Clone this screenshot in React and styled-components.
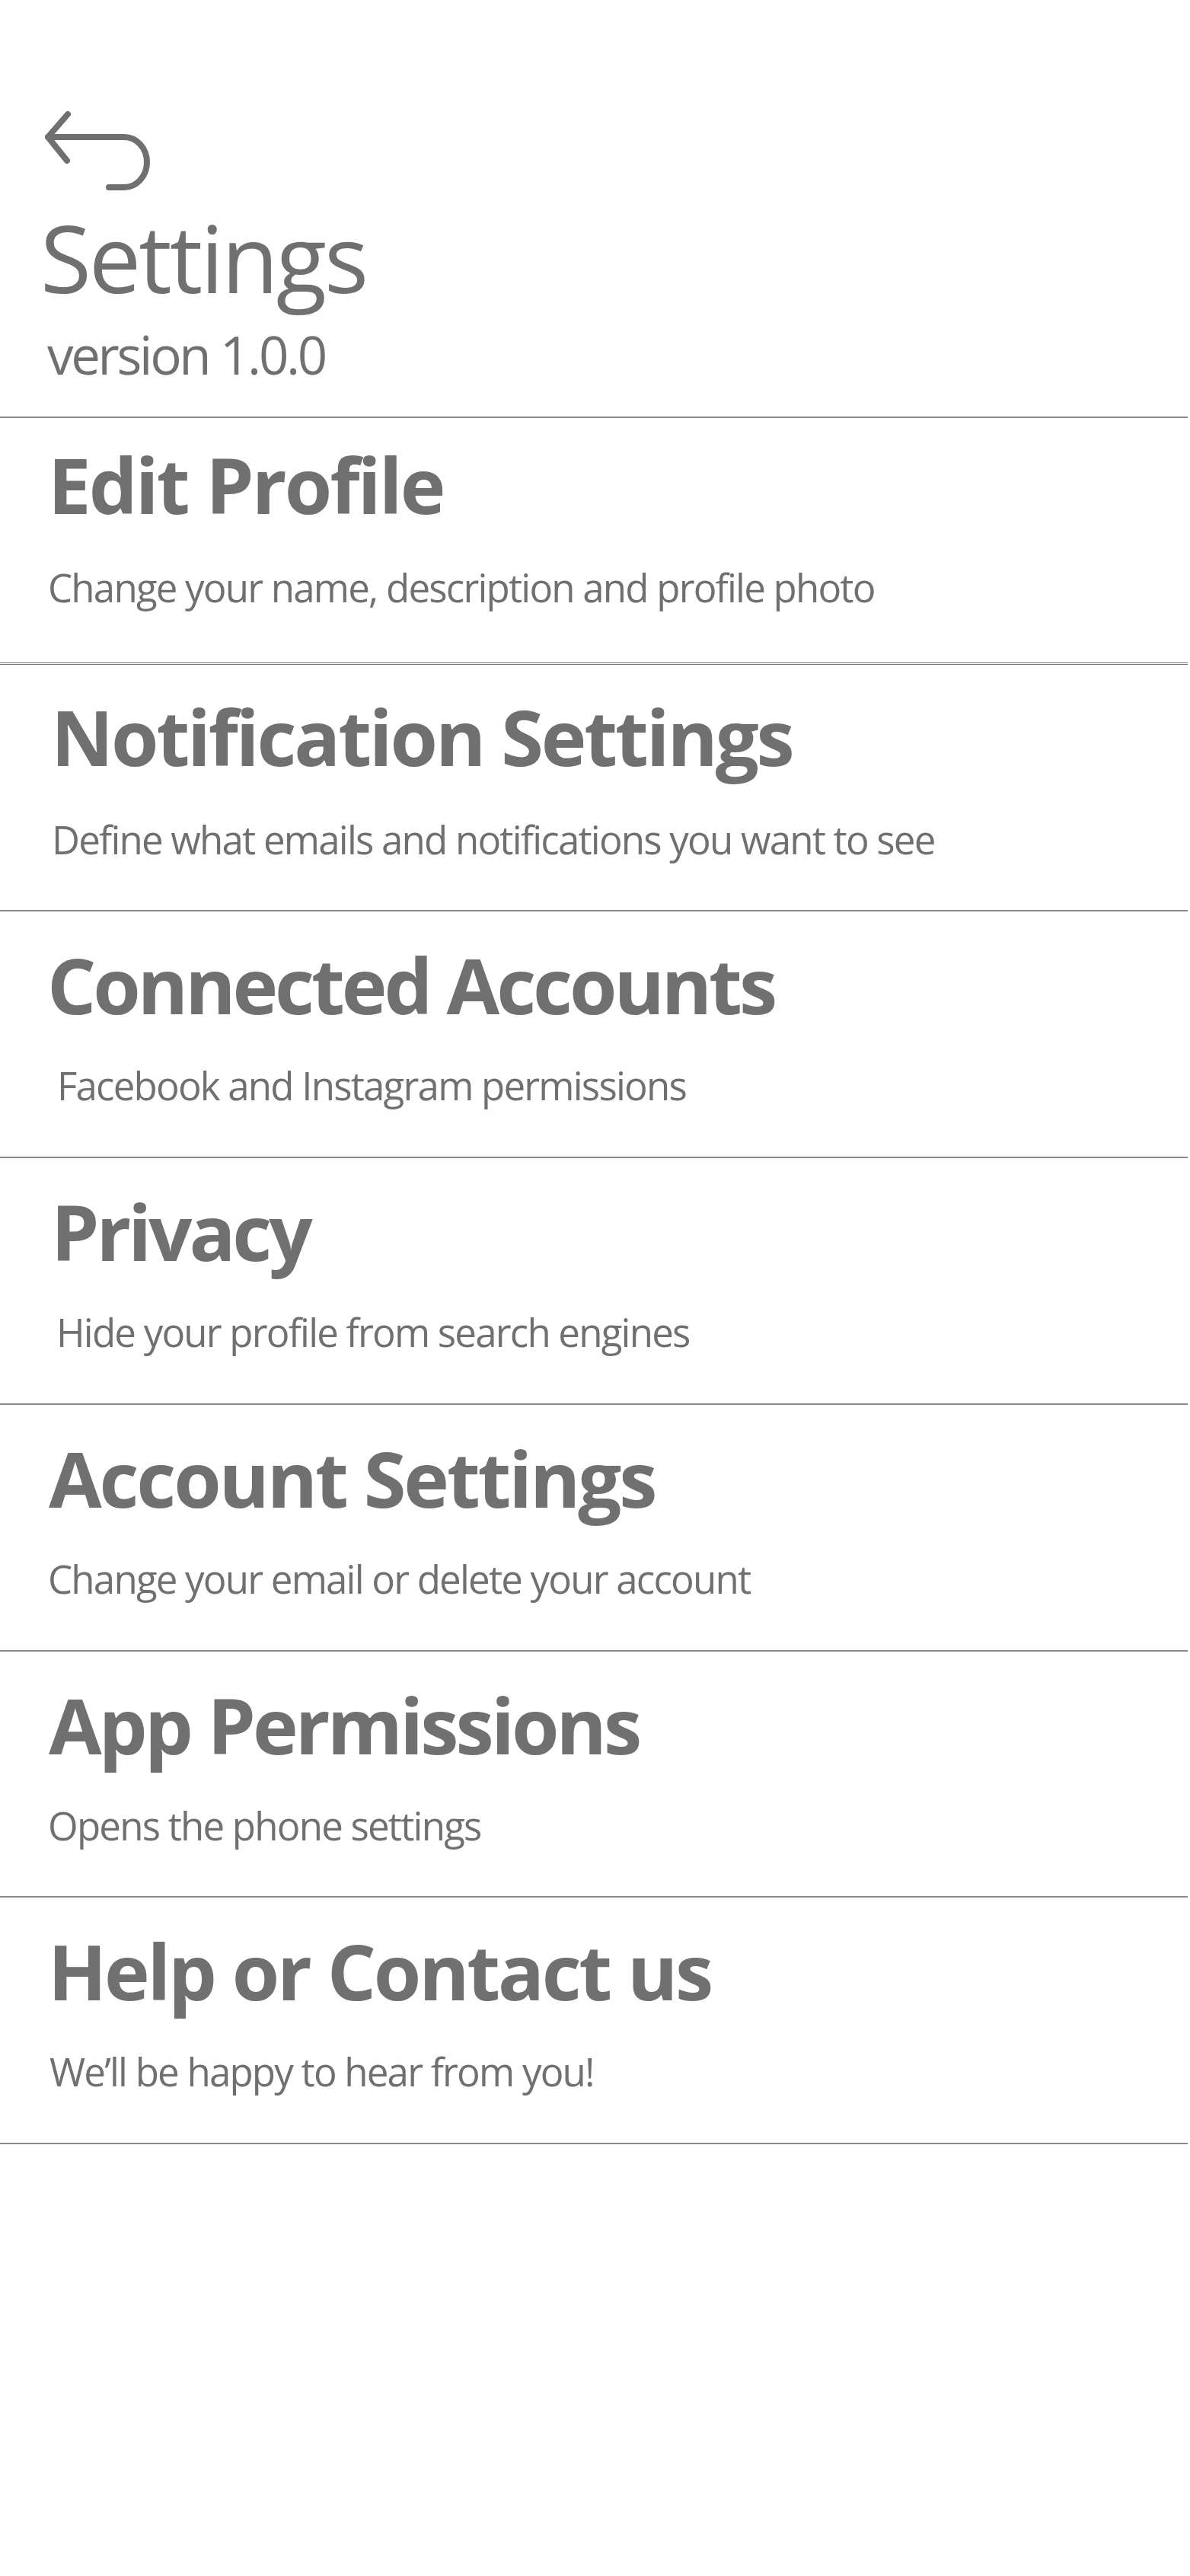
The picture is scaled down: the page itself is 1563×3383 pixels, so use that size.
import React from 'react';
import styled, { createGlobalStyle } from 'styled-components';

const GlobalStyle = createGlobalStyle`
  html, body {
    margin: 0;
    padding: 0;
    background: #ffffff;
  }
  body {
    font-family: "Open Sans", "Noto Sans", "DejaVu Sans", sans-serif;
    color: #707070;
  }
`;

const Page = styled.main`
  width: 1563px;
  min-height: 3383px;
  background: #ffffff;
  display: flex;
  flex-direction: column;
`;

const Header = styled.header`
  display: flex;
  flex-direction: column;
  align-items: flex-start;
  padding: 140px 0 47px 0;
`;

const BackButton = styled.button`
  margin-left: 55px;
  padding: 0;
  border: none;
  background: transparent;
  width: 150px;
  height: 120px;
  display: block;
  cursor: pointer;
  svg {
    display: block;
  }
`;

const PageTitle = styled.h1`
  margin: 17px 0 0 53px;
  font-size: 122px;
  line-height: 1;
  font-weight: 400;
  letter-spacing: -0.025em;
  color: #707070;
`;

const Version = styled.p`
  margin: 32px 0 0 62px;
  font-size: 69px;
  line-height: 1;
  font-weight: 400;
  letter-spacing: -0.048em;
  color: #707070;
`;

const List = styled.ul`
  list-style: none;
  margin: 0;
  padding: 0;
  width: 1560px;
  border-bottom: 2px solid #8a8a8a;
`;

const Row = styled.li`
  box-sizing: border-box;
  height: ${(p) => p.$h}px;
  border-top: ${(p) => (p.$double ? '3px double #707070' : '2px solid #8a8a8a')};
  padding-top: ${(p) => p.$top}px;
  display: flex;
  flex-direction: column;
  align-items: flex-start;
  gap: ${(p) => p.$gap}px;
  cursor: pointer;
`;

const ItemTitle = styled.h2`
  margin: 0 0 0 ${(p) => p.$x}px;
  font-size: 101px;
  line-height: 1;
  font-weight: 700;
  letter-spacing: ${(p) => p.$ls}em;
  color: #707070;
  white-space: nowrap;
`;

const ItemDesc = styled.p`
  margin: 0 0 0 ${(p) => p.$x}px;
  font-size: 51px;
  line-height: 1;
  font-weight: 400;
  letter-spacing: -0.035em;
  color: #707070;
  white-space: nowrap;
`;

const BackIcon = () => (
  <svg width="150" height="120" viewBox="0 0 150 120" fill="none">
    <path
      d="M34 10 L8 40 L33 71 M8 40 H108 A30 33 0 0 1 108 106 H88"
      stroke="#707070"
      strokeWidth="8"
      strokeLinecap="round"
      strokeLinejoin="round"
    />
  </svg>
);

const items = [
  { title: 'Edit Profile', desc: 'Change your name, description and profile photo', h: 323, top: 37, gap: 59, tx: 63, dx: 63, ls: -0.028 },
  { title: 'Notification Settings', desc: 'Define what emails and notifications you want to see', h: 325, top: 44, gap: 59, tx: 67, dx: 68, ls: -0.031, double: true },
  { title: 'Connected Accounts', desc: 'Facebook and Instagram permissions', h: 324, top: 46, gap: 56, tx: 62, dx: 75, ls: -0.04 },
  { title: 'Privacy', desc: 'Hide your profile from search engines', h: 324, top: 46, gap: 56, tx: 67, dx: 74, ls: -0.04 },
  { title: 'Account Settings', desc: 'Change your email or delete your account', h: 324, top: 46, gap: 56, tx: 64, dx: 63, ls: -0.031 },
  { title: 'App Permissions', desc: 'Opens the phone settings', h: 323, top: 46, gap: 56, tx: 64, dx: 63, ls: -0.038 },
  { title: 'Help or Contact us', desc: 'We’ll be happy to hear from you!', h: 324, top: 46, gap: 56, tx: 63, dx: 65, ls: -0.032 },
];

export default function App() {
  return (
    <>
      <GlobalStyle />
      <Page>
        <Header>
          <BackButton aria-label="Back">
            <BackIcon />
          </BackButton>
          <PageTitle>Settings</PageTitle>
          <Version>version 1.0.0</Version>
        </Header>
        <List>
          {items.map((it) => (
            <Row key={it.title} $h={it.h} $top={it.top} $gap={it.gap} $double={it.double}>
              <ItemTitle $x={it.tx} $ls={it.ls}>{it.title}</ItemTitle>
              <ItemDesc $x={it.dx}>{it.desc}</ItemDesc>
            </Row>
          ))}
        </List>
      </Page>
    </>
  );
}
